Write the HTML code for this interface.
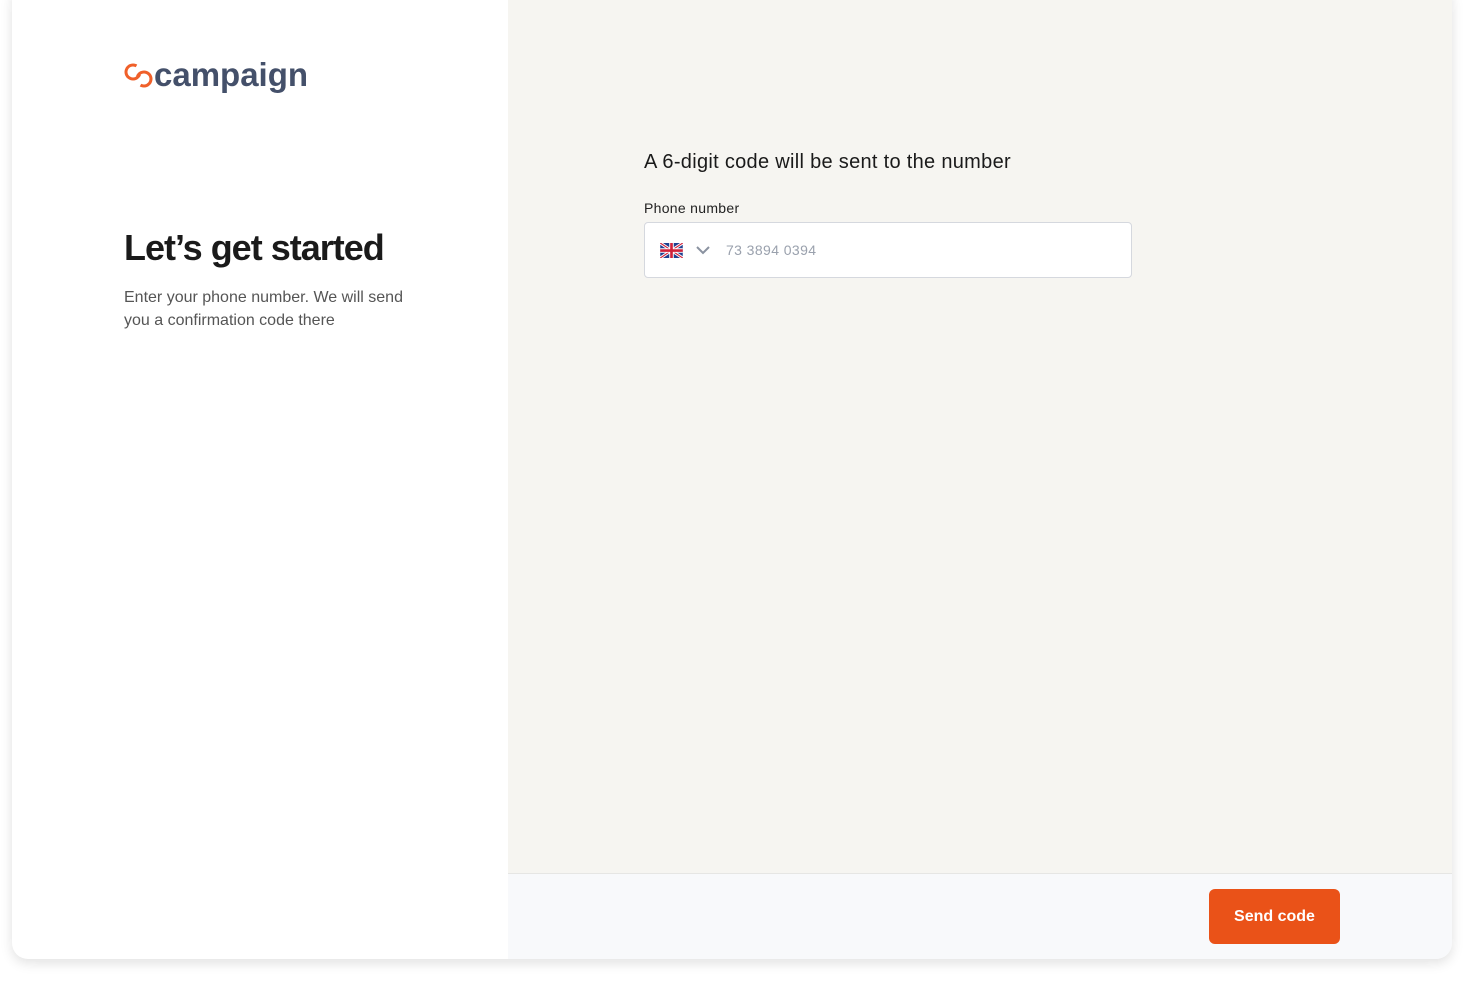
<!DOCTYPE html><html><head><style>
body{margin:0;width:1464px;height:984px;background:#fff;font-family:"Liberation Sans",sans-serif;position:relative;overflow:hidden}
.card{position:absolute;left:12px;top:-16px;width:1440px;height:975px;border-radius:16px;overflow:hidden;box-shadow:0 4px 12px rgba(0,0,0,.12);background:#fff}
.right{position:absolute;left:496px;top:0;width:944px;height:975px;background:#f6f5f1}
.foot{position:absolute;left:0;bottom:0;width:944px;height:85px;background:#f8f9fb;border-top:1px solid #e6e6e4}
.btn{position:absolute;left:701px;top:15px;width:131px;height:55px;border-radius:6px;background:#ea5218;color:#fff;font-size:16px;font-weight:bold;text-align:center;line-height:55px}
</style></head><body><div class="card">
<div style="position:absolute;left:111px;top:72px;display:flex;align-items:center">
<svg width="32" height="30" viewBox="0 0 32 30"><circle cx="10" cy="12" r="7" fill="none" stroke="#f0602a" stroke-width="3" stroke-dasharray="34 10" transform="rotate(20 10 12)"/><circle cx="21" cy="19" r="7" fill="none" stroke="#f0602a" stroke-width="3" stroke-dasharray="34 10" transform="rotate(200 21 19)"/></svg>
<span style="font-size:33px;font-weight:bold;color:#44506a;margin-left:-1px">campaign</span></div>
<div style="position:absolute;left:112px;top:243px;font-size:36px;font-weight:bold;color:#1a1a1a;letter-spacing:-1px">Let’s get started</div>
<div style="position:absolute;left:112px;top:302px;font-size:16px;line-height:23px;color:#555;width:300px">Enter your phone number. We will send you a confirmation code there</div>
<div class="right">
<div style="position:absolute;left:136px;top:167px;font-size:20px;color:#1a1a1a;letter-spacing:0.3px">A 6-digit code will be sent to the number</div>
<div style="position:absolute;left:136px;top:216px;font-size:14px;color:#222;letter-spacing:0.3px">Phone number</div>
<div style="position:absolute;left:136px;top:238px;width:486px;height:54px;background:#fff;border:1px solid #d5d8de;border-radius:4px">
<svg style="position:absolute;left:15px;top:20px" width="23" height="15" viewBox="0 0 60 40"><rect width="60" height="40" fill="#1f3f8f"/><path d="M0 0L60 40M60 0L0 40" stroke="#fff" stroke-width="8"/><path d="M0 0L60 40M60 0L0 40" stroke="#d0213a" stroke-width="3"/><path d="M30 0V40M0 20H60" stroke="#fff" stroke-width="12"/><path d="M30 0V40M0 20H60" stroke="#d0213a" stroke-width="7"/></svg>
<svg style="position:absolute;left:50px;top:21px" width="16" height="12" viewBox="0 0 16 12"><path d="M2 3l6 6 6-6" fill="none" stroke="#8a92a0" stroke-width="2"/></svg>
<div style="position:absolute;left:81px;top:19px;font-size:14px;color:#9aa1ad;letter-spacing:0.4px">73 3894 0394</div></div>
<div class="foot"><div class="btn">Send code</div></div>
</div></div></body></html>
